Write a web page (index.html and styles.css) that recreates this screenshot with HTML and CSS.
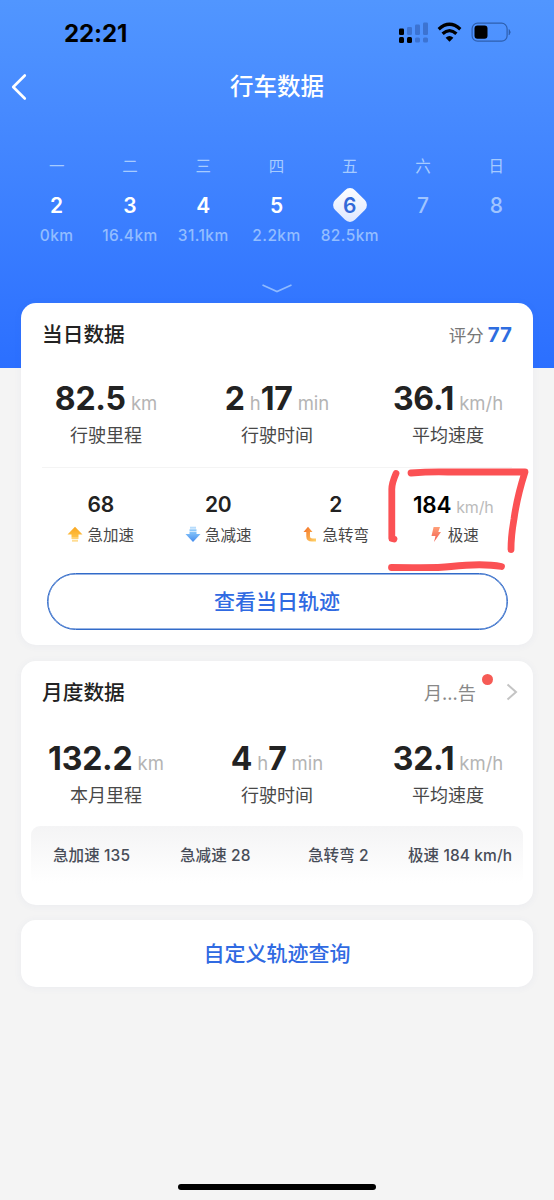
FILE: index.html
```html
<!DOCTYPE html>
<html lang="zh-CN">
<head>
<meta charset="utf-8">
<meta name="viewport" content="width=device-width, initial-scale=1">
<title>行车数据</title>
<link rel="stylesheet" href="styles.css">
</head>
<body>
<div class="status">
  <span class="clock">22:21</span>
  <svg class="status-icons" width="114" height="24" viewBox="0 0 114 24">
    <g fill="#000"><rect x="1" y="8.5" width="5" height="6.5" rx="1.3"/><rect x="1" y="17" width="5" height="6" rx="1.5"/><rect x="9" y="17" width="5" height="6" rx="1.5"/></g>
    <g fill="#3668c2" opacity=".72"><rect x="9" y="7" width="5" height="8" rx="1.3"/><rect x="17" y="4.500" width="5" height="10.500" rx="1.3"/><rect x="25" y="2.500" width="5" height="12.500" rx="1.300"/><rect x="17" y="17.500" width="5" height="5" rx="1.500"/><rect x="25" y="17.500" width="5" height="5" rx="1.500"/></g>
    <g fill="none" stroke="#000" stroke-width="3.300"><path d="M40.700 9.200Q51.500-.6 62.300 9.200"/><path d="M44.600 13.700Q51.500 7.600 58.400 13.700"/></g>
    <path d="M47.600 17.700Q51.500 14.300 55.400 17.700L51.500 21.800Z" fill="#000"/>
    <rect x="74.100" y="3.200" width="35" height="18" rx="5.500" fill="none" stroke="#2e5fae" stroke-width="1.200"/>
    <rect x="76.500" y="5.600" width="13" height="13.200" rx="3" fill="#000"/>
    <path d="M111 9.500q2.600 2.700 0 5.400z" fill="#2e5fae" stroke="#2e5fae" stroke-width=".6"/>
  </svg>
</div>
<header class="nav">
  <svg class="back" width="16" height="28" viewBox="0 0 16 28"><path d="M13.800 2.500 2.200 14 13.800 25.500" fill="none" stroke="#fff" stroke-width="2.600" stroke-linecap="round" stroke-linejoin="round"/></svg>
  <h1>行车数据</h1>
</header>
<section class="week">
  <div class="day"><span class="name">一</span><b>2</b><span class="dist">0km</span></div>
  <div class="day"><span class="name">二</span><b>3</b><span class="dist">16.4km</span></div>
  <div class="day"><span class="name">三</span><b>4</b><span class="dist">31.1km</span></div>
  <div class="day"><span class="name">四</span><b>5</b><span class="dist">2.2km</span></div>
  <div class="day active"><span class="name">五</span><b>6</b><span class="dist">82.5km</span></div>
  <div class="day future"><span class="name">六</span><b>7</b></div>
  <div class="day future"><span class="name">日</span><b>8</b></div>
</section>
<div class="expand"><svg width="32" height="10" viewBox="0 0 32 10"><path d="M1.500 2 16 8.500 30.500 2" fill="none" stroke="#8fbaff" stroke-width="1.600"/></svg></div>

<main class="cards">
  <section class="card daily">
    <div class="card-head"><h2>当日数据</h2><span class="score">评分<b>77</b></span></div>
    <div class="stats">
      <div class="stat"><p class="value"><b>82.5</b><i>km</i></p><p class="label">行驶里程</p></div>
      <div class="stat"><p class="value"><b>2</b><i>h</i><b>17</b><i>min</i></p><p class="label">行驶时间</p></div>
      <div class="stat"><p class="value"><b>36.1</b><i>km/h</i></p><p class="label">平均速度</p></div>
    </div>
    <div class="events">
      <div class="event"><p class="count">68</p><p class="kind">
        <svg width="16" height="17" viewBox="0 0 16 17"><defs><linearGradient id="up" x2="0" y2="1"><stop stop-color="#f9a51e"/><stop offset="1" stop-color="#ffc247"/></linearGradient></defs><path d="M8 .7 15.500 8.500H11.500V11H4.500V8.500H.5Z" fill="url(#up)"/><path d="M4.500 11.200h7v1.600h-7z" fill="#ffc650"/><path d="M5 13.700h6v2H5z" fill="#ffdc91"/></svg>急加速</p></div>
      <div class="event"><p class="count">20</p><p class="kind">
        <svg width="16" height="17" viewBox="0 0 16 17"><defs><linearGradient id="down" x2="0" y2="1"><stop stop-color="#87c5fa"/><stop offset="1" stop-color="#438bed"/></linearGradient></defs><path d="M5 .7h6v2H5z" fill="#b7dcfc"/><path d="M4.500 3.300h7v1.900h-7z" fill="#8cc7fa"/><path d="M4.500 5.700h7V8h4L8 16 .5 8h4Z" fill="url(#down)"/></svg>急减速</p></div>
      <div class="event"><p class="count">2</p><p class="kind">
        <svg width="16" height="17" viewBox="0 0 16 17"><defs><linearGradient id="turn" x2="1" y2="1"><stop stop-color="#f36a22"/><stop offset="1" stop-color="#ffd467"/></linearGradient></defs><path d="M6 .8 10.500 6H8V10Q8 12.500 10.500 12.500H14V15.500H10Q4.300 15.500 4.300 10.500V6H1.500Z" fill="url(#turn)"/></svg>急转弯</p></div>
      <div class="event top"><p class="count">184<i>km/h</i></p><p class="kind">
        <svg width="16" height="17" viewBox="0 0 16 17"><defs><linearGradient id="bolt" x2="0" y2="1"><stop stop-color="#ffa078"/><stop offset="1" stop-color="#f15b50"/></linearGradient></defs><path d="M5.600 1H12L10.300 6H13L6 16 7.500 10H3.500Z" fill="url(#bolt)"/></svg>极速</p></div>
    </div>
    <button class="track">查看当日轨迹</button>
    <svg class="marker" width="150" height="110" viewBox="380 464 150 110"><path d="M396 473.500Q391.500 484 391.800 490V538.500L394 539M411 473Q430 471.500 448 472H525Q517 497 514 519Q511 536 511 549.500M391.500 567.500C420 567.500 433 568.500 451 566.500S488 564 501.500 566.500" fill="none" stroke="#fb5154" stroke-width="6.800" stroke-linecap="round" stroke-linejoin="round"/></svg>
  </section>

  <section class="card monthly">
    <div class="card-head"><h2>月度数据</h2><span class="report">月...告<span class="dot"></span><svg width="12" height="18" viewBox="0 0 12 18"><path d="m1.500 1.500 8.500 7.500-8.500 7.500" fill="none" stroke="#c4c4c4" stroke-width="2"/></svg></span></div>
    <div class="stats">
      <div class="stat"><p class="value"><b>132.2</b><i>km</i></p><p class="label">本月里程</p></div>
      <div class="stat"><p class="value"><b>4</b><i>h</i><b>7</b><i>min</i></p><p class="label">行驶时间</p></div>
      <div class="stat"><p class="value"><b>32.1</b><i>km/h</i></p><p class="label">平均速度</p></div>
    </div>
    <div class="summary"><span>急加速 135</span><span>急减速 28</span><span>急转弯 2</span><span>极速 184 km/h</span></div>
  </section>
  <section class="card query">自定义轨迹查询</section>
</main>
<div class="home-bar"></div>
</body>
</html>
```
FILE: styles.css
```css
* { box-sizing: border-box; }
body {
  margin: 0;
  width: 554px;
  height: 1200px;
  display: flex;
  flex-direction: column;
  font-family: Inter, "Noto Sans CJK SC", sans-serif;
  color: #222;
  background: linear-gradient(#5196ff, #478aff 110px, #2b6fff 368px) no-repeat 0 0 / 100% 368px, #f4f4f4;
  overflow: hidden;
}
h1, h2, p { margin: 0; font-weight: 500; }
i { font-style: normal; }
svg { flex: none; display: block; }

.status { height: 60px; padding: 6px 42px 0 64px; display: flex; align-items: center; justify-content: space-between; }
.clock { font-size: 24px; font-weight: 700; letter-spacing: -.1px; color: #000; }
.status-icons { margin-top: -3px; }
.nav { height: 52px; display: grid; grid-template-columns: 60px 1fr 60px; align-items: center; }
.back { margin-left: 11px; }
.nav h1 { padding-top: 1px; font-size: 23.500px; line-height: 52px; color: #fff; text-align: center; }

.week { height: 164px; padding: 40px 21px 0 20px; display: grid; grid-template-columns: repeat(7, 1fr); }
.day { display: flex; flex-direction: column; align-items: center; color: #fff; }
.name { height: 28px; line-height: 29px; font-size: 15.500px; font-weight: 400; color: #a6cbff; }
.day b { width: 36px; height: 36px; margin-top: 7px; line-height: 37px; font-size: 21px; font-weight: 600; text-align: center; }
.dist { height: 24px; line-height: 24px; margin-top: 1px; font-size: 15.500px; font-weight: 500; letter-spacing: .4px; color: #93bdff; }
.future b { color: #a0c5ff; font-weight: 500; }
.active b { position: relative; z-index: 0; color: #3269d8; }
.active b::before {
  content: "";
  position: absolute;
  z-index: -1;
  inset: 4px;
  border-radius: 7px;
  background: linear-gradient(135deg, #fff, #dce6ff);
  transform: rotate(45deg);
}
.expand { height: 27px; padding-top: 7px; display: flex; justify-content: center; }

.cards { padding: 0 21px; display: flex; flex-direction: column; gap: 15.500px; }
.card { background: #fff; border-radius: 15px; box-shadow: 0 1px 8px rgba(60, 75, 150, .05); }
.daily { position: relative; height: 342px; padding-top: 11px; }
.monthly { height: 244px; padding-top: 11px; }
.card-head { height: 40px; padding: 0 21px; display: flex; align-items: center; justify-content: space-between; }
h2 { padding-top: 1px; font-size: 20.700px; line-height: 41px; }
.score { display: flex; align-items: center; font-size: 17.500px; color: #777; }
.score b { margin-left: 4px; font-size: 20.500px; font-weight: 700; color: #2e6de0; }
.stats { height: 113px; padding-top: 24px; display: grid; grid-template-columns: repeat(3, 171px); }
.stat { margin-left: -1px; text-align: center; }
.value { height: 42px; line-height: 42px; white-space: nowrap; }
.value b { font-size: 32px; font-weight: 700; letter-spacing: -.2px; }
.value i { margin-left: 5px; font-size: 18.500px; font-weight: 400; color: #b4b4b4; }
.label { height: 30px; line-height: 31px; font-size: 18px; font-weight: 400; color: #484848; }
.events { height: 106px; margin: 0 21px; padding: 22px 0 0; border-top: 1px solid #f4f4f4; display: grid; grid-template-columns: repeat(4, 117.500px); }
.event { text-align: center; }
.count { height: 29px; line-height: 30px; font-size: 21px; font-weight: 600; letter-spacing: -.2px; white-space: nowrap; }
.count i { margin-left: 5px; font-size: 16px; font-weight: 400; color: #bbb; }
.top .count { font-size: 22.500px; color: #000; }
.kind { height: 30px; display: flex; align-items: center; justify-content: center; gap: 4px; font-size: 15.500px; color: #484848; font-weight: 400; }
.track { display: block; width: 461px; height: 57px; margin: 0 auto; padding: 0; border: 1.500px solid #326bc9; border-radius: 29px; background: none; box-shadow: inset 0 0 0 .5px #326bc9; font: 500 21px/54px Inter, "Noto Sans CJK SC", sans-serif; color: #306ae2; }
.marker { position: absolute; left: 359px; top: 161px; }

.report { position: relative; display: flex; align-items: center; font-size: 18.200px; color: #888; }
.report svg { margin-left: 30px; margin-right: -6px; }
.dot { position: absolute; left: 58px; top: -5px; width: 11px; height: 11px; border-radius: 50%; background: #f65b55; }
.monthly .stats { height: 114px; padding-top: 26px; }
.summary { height: 60px; margin: 0 10px; padding: 0 0 3px 22px; border-radius: 9px; display: grid; grid-template-columns: 127px 128px 100px auto; align-items: center; background: linear-gradient(#f4f4f5, #fff 95%); font-size: 15.500px; font-weight: 500; letter-spacing: .1px; color: #484d58; white-space: nowrap; }
.query { height: 67px; line-height: 67px; text-align: center; font-size: 21px; font-weight: 500; color: #306ae2; }
.home-bar { width: 198px; height: 6px; margin: auto auto 10px; border-radius: 3px; background: #000; }
```
